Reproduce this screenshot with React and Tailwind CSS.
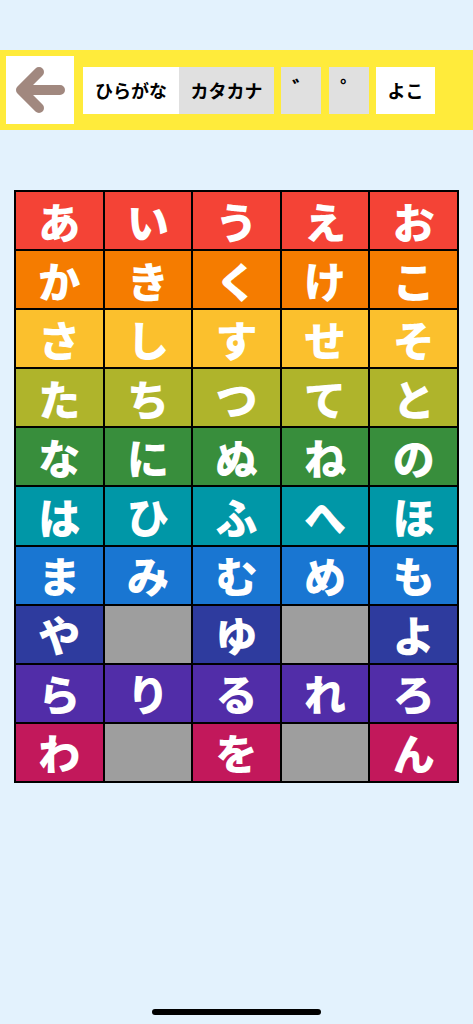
import React from "react";

const rows = [
  { color: "bg-[#f44336]", chars: ["あ", "い", "う", "え", "お"] },
  { color: "bg-[#f57c00]", chars: ["か", "き", "く", "け", "こ"] },
  { color: "bg-[#fbc02d]", chars: ["さ", "し", "す", "せ", "そ"] },
  { color: "bg-[#afb42b]", chars: ["た", "ち", "つ", "て", "と"] },
  { color: "bg-[#388e3c]", chars: ["な", "に", "ぬ", "ね", "の"] },
  { color: "bg-[#0097a7]", chars: ["は", "ひ", "ふ", "へ", "ほ"] },
  { color: "bg-[#1976d2]", chars: ["ま", "み", "む", "め", "も"] },
  { color: "bg-[#2e3b9e]", chars: ["や", "", "ゆ", "", "よ"] },
  { color: "bg-[#512da8]", chars: ["ら", "り", "る", "れ", "ろ"] },
  { color: "bg-[#c2185b]", chars: ["わ", "", "を", "", "ん"] },
];

const jp = { fontFamily: '"Noto Sans CJK JP", "Noto Sans", sans-serif' };

export default function App() {
  return (
    <div className="min-h-[1024px] bg-[#e3f2fd] relative" style={jp}>
      <div className="h-[50px]" />
      {/* top bar */}
      <div className="h-[80px] bg-[#ffeb3b] flex items-center px-[6px]">
        <button className="w-[68px] h-[68px] bg-white flex items-center justify-center">
          <svg width="50" height="54" viewBox="0 0 50 54">
            <path
              d="M45 27 H8 M24 9 L6 27 L24 45"
              fill="none"
              stroke="#a1887f"
              strokeWidth="10"
              strokeLinecap="round"
              strokeLinejoin="round"
            />
          </svg>
        </button>
        <div className="flex ml-[9px] h-[47px]">
          <div className="w-[96px] bg-white flex items-center justify-center text-[18px] font-bold text-black">
            ひらがな
          </div>
          <div className="w-[95px] bg-[#e0e0e0] flex items-center justify-center text-[18px] font-bold text-black">
            カタカナ
          </div>
        </div>
        <div className="w-[40px] h-[47px] ml-[7px] bg-[#e0e0e0] flex items-start justify-center pt-[9px] pl-[4px] text-[22px] font-bold leading-none">
          ゛
        </div>
        <div className="w-[40px] h-[47px] ml-[8px] bg-[#e0e0e0] flex items-start justify-center pt-[9px] pl-[4px] text-[22px] font-bold leading-none">
          ゜
        </div>
        <div className="w-[59px] h-[47px] ml-[7px] bg-white flex items-center justify-center text-[18px] font-bold">
          よこ
        </div>
      </div>

      {/* kana grid */}
      <div className="mt-[60px] ml-[14px] w-[445px] h-[593px] bg-black p-[2px] grid grid-cols-5 grid-rows-10 gap-[2px]">
        {rows.map((row, ri) =>
          row.chars.map((ch, ci) => (
            <div
              key={ri + "-" + ci}
              className={
                "flex items-center justify-center text-white font-black text-[42px] leading-none " +
                (ch ? row.color : "bg-[#9e9e9e]")
              }
            >
              {ch}
            </div>
          ))
        )}
      </div>

      {/* home indicator */}
      <div className="absolute left-[152px] top-[1009px] w-[169px] h-[6px] rounded-full bg-black" />
    </div>
  );
}
